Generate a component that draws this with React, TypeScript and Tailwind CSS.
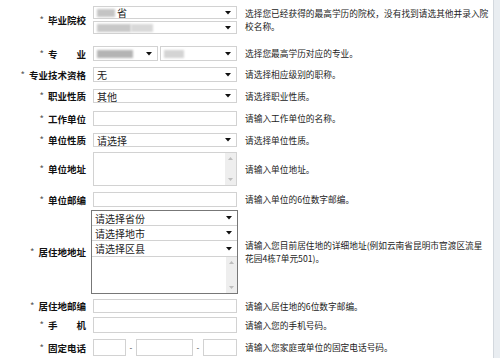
import React from "react";

const font = { fontFamily: '"Noto Sans CJK SC", "Noto Sans", sans-serif' };

function Arrow() {
  return (
    <svg width="6" height="4" viewBox="0 0 6 4" className="shrink-0">
      <path d="M0 0 L6 0 L3 3.5 Z" fill="#111" />
    </svg>
  );
}

function Select({
  children,
  className = "",
}: {
  children?: React.ReactNode;
  className?: string;
}) {
  return (
    <div
      className={`flex items-center justify-between border border-[#d2d2d2] bg-white pl-[3px] pr-[5px] text-[10px] leading-[11px] text-[#222] ${className}`}
    >
      <div className="flex items-center whitespace-nowrap">{children}</div>
      <Arrow />
    </div>
  );
}

function Input({ className = "" }: { className?: string }) {
  return <div className={`border border-[#d2d2d2] bg-white ${className}`} />;
}

function Scroll() {
  return (
    <div className="flex w-[11px] flex-col items-center justify-between bg-[#eeeeee] py-[4px]">
      <svg width="5" height="3" viewBox="0 0 5 3">
        <path d="M0 3 L5 3 L2.5 0 Z" fill="#bdbdbd" />
      </svg>
      <svg width="5" height="3" viewBox="0 0 5 3">
        <path d="M0 0 L5 0 L2.5 3 Z" fill="#bdbdbd" />
      </svg>
    </div>
  );
}

function TextArea({ className = "" }: { className?: string }) {
  return (
    <div className={`flex border border-[#d2d2d2] bg-white ${className}`}>
      <div className="flex-1" />
      <Scroll />
    </div>
  );
}

function Blur({ w, c = "#b9b9b9" }: { w: number; c?: string }) {
  return (
    <div
      className="h-[8px] blur-[1.2px]"
      style={{ width: w, backgroundColor: c }}
    />
  );
}

function Label({ text }: { text: string }) {
  return (
    <div className="flex w-[86px] shrink-0 items-center justify-end whitespace-nowrap text-[9.5px] leading-[12px] font-bold text-[#111]">
      <span className="mr-[4px] font-normal text-[#555]">*</span>
      <span>{text}</span>
    </div>
  );
}

function Help({ children, className = "ml-[8px]" }: { children: React.ReactNode; className?: string }) {
  return (
    <div className={`${className} whitespace-nowrap text-[8.7px] leading-[13px] text-[#222]`}>
      {children}
    </div>
  );
}

function Row({
  label,
  mt,
  h,
  control,
  help,
}: {
  label: string;
  mt: string;
  h: string;
  control: React.ReactNode;
  help: React.ReactNode;
}) {
  return (
    <div className={`flex items-center ${mt} ${h}`}>
      <Label text={label} />
      <div className="ml-[7px] flex h-full w-[144px] shrink-0">{control}</div>
      <Help>{help}</Help>
    </div>
  );
}

export default function App() {
  return (
    <div className="flex h-[358px] w-[500px] overflow-hidden bg-white" style={font}>
      <div className="flex w-[493px] flex-col">
        <Row
          label="毕业院校"
          mt="mt-[6px]"
          h="h-[28px]"
          control={
            <div className="flex w-full flex-col gap-[2px]">
              <Select className="h-[13px]">
                <Blur w={18} c="#c4c4c4" />
                <span className="ml-[2px]">省</span>
              </Select>
              <Select className="h-[13px]">
                <Blur w={34} c="#c8c8c8" />
                <Blur w={22} c="#d8d8d8" />
              </Select>
            </div>
          }
          help={
            <>
              选择您已经获得的最高学历的院校，没有找到请选其他并录入院
              <br />
              校名称。
            </>
          }
        />
        <Row
          label="专　　业"
          mt="mt-[12px]"
          h="h-[15px]"
          control={
            <div className="flex w-full gap-[2px]">
              <Select className="h-full w-[65px]">
                <Blur w={36} c="#b4b4b4" />
              </Select>
              <Select className="h-full flex-1">
                <Blur w={20} c="#d4d4d4" />
              </Select>
            </div>
          }
          help="选择您最高学历对应的专业。"
        />
        <Row
          label="专业技术资格"
          mt="mt-[6px]"
          h="h-[15px]"
          control={<Select className="h-full w-full">无</Select>}
          help="请选择相应级别的职称。"
        />
        <Row
          label="职业性质"
          mt="mt-[7px]"
          h="h-[14px]"
          control={<Select className="h-full w-full">其他</Select>}
          help="请选择职业性质。"
        />
        <Row
          label="工作单位"
          mt="mt-[8px]"
          h="h-[15px]"
          control={<Input className="h-full w-full" />}
          help="请输入工作单位的名称。"
        />
        <Row
          label="单位性质"
          mt="mt-[7px]"
          h="h-[14px]"
          control={<Select className="h-full w-full">请选择</Select>}
          help="请选择单位性质。"
        />
        <Row
          label="单位地址"
          mt="mt-[5px]"
          h="h-[34px]"
          control={<TextArea className="h-full w-full" />}
          help="请输入单位地址。"
        />
        <Row
          label="单位邮编"
          mt="mt-[6px]"
          h="h-[15px]"
          control={<Input className="h-full w-full" />}
          help="请输入单位的6位数字邮编。"
        />
        <div className="mt-[3px] flex h-[84px] items-center">
          <Label text="居住地地址" />
          <div className="ml-[5px] flex h-full w-[147px] shrink-0 flex-col border border-[#777777] bg-white">
            <Select className="h-[15px] border-x-0 border-t-0">请选择省份</Select>
            <Select className="h-[15px] border-x-0 border-t-0">请选择地市</Select>
            <Select className="h-[16px] border-x-0 border-t-0">请选择区县</Select>
            <div className="flex flex-1">
              <div className="flex-1" />
              <Scroll />
            </div>
          </div>
          <Help className="ml-[7px]">
            请输入您目前居住地的详细地址(例如云南省昆明市官渡区流星
            <br />
            花园4栋7单元501)。
          </Help>
        </div>
        <Row
          label="居住地邮编"
          mt="mt-[5px]"
          h="h-[14px]"
          control={<Input className="h-full w-full" />}
          help="请输入居住地的6位数字邮编。"
        />
        <Row
          label="手　　机"
          mt="mt-[4px]"
          h="h-[16px]"
          control={<Input className="h-full w-full" />}
          help="请输入您的手机号码。"
        />
        <Row
          label="固定电话"
          mt="mt-[6px]"
          h="h-[17px]"
          control={
            <div className="flex w-full items-center">
              <Input className="h-full w-[33px]" />
              <span className="w-[10px] text-center text-[8px] leading-none text-[#333]">-</span>
              <Input className="h-full w-[57px]" />
              <span className="w-[10px] text-center text-[8px] leading-none text-[#333]">-</span>
              <Input className="h-full flex-1" />
            </div>
          }
          help="请输入您家庭或单位的固定电话号码。"
        />
      </div>
      <div className="w-[7px] border-l border-[#d3d8de] bg-[#e9edf1]" />
    </div>
  );
}
